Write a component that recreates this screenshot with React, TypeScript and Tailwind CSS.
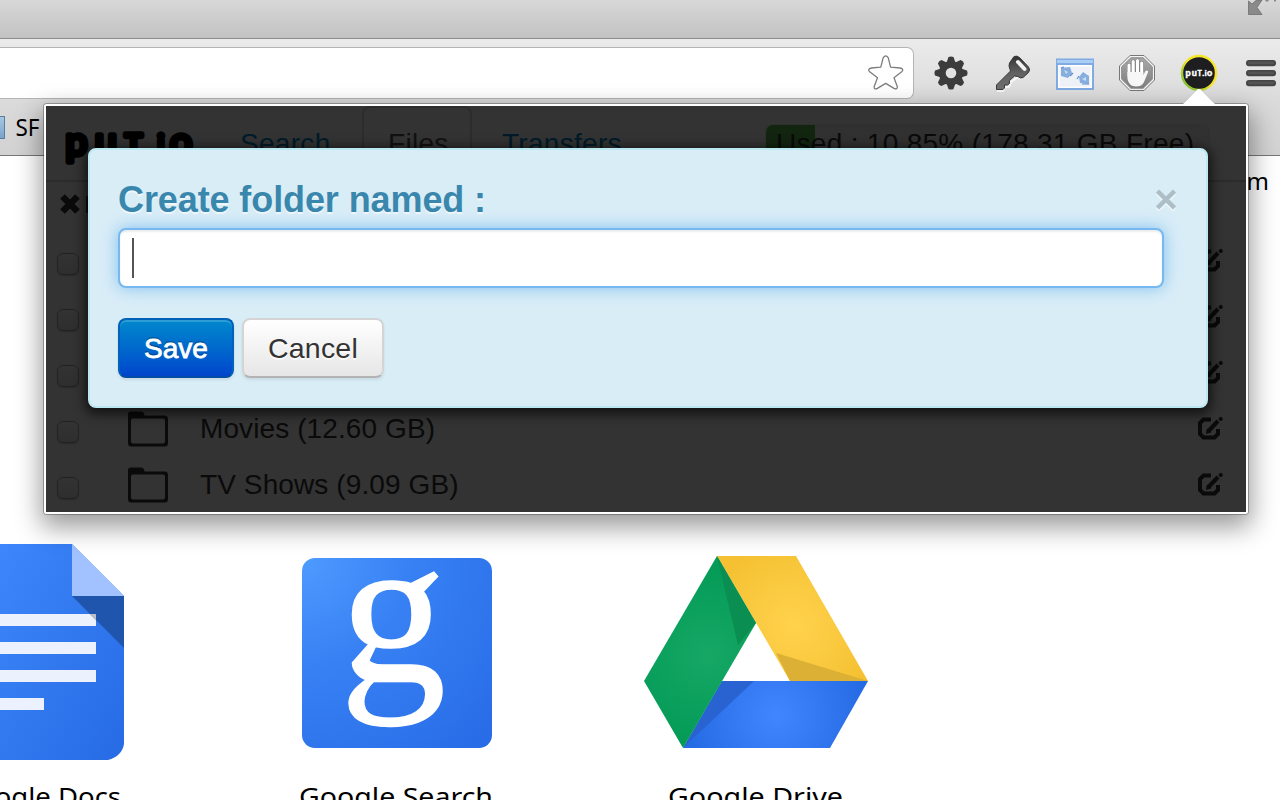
import React from 'react';

const ROWS = [
  { name: '', size: '' },
  { name: '', size: '' },
  { name: '', size: '' },
  { name: 'Movies', size: '(12.60 GB)' },
  { name: 'TV Shows', size: '(9.09 GB)' },
];

function StarIcon() {
  return (
    <svg className="h-[38px] w-[38px]" viewBox="866 54 38 38" fill="#fff" stroke="#7d7d7d" strokeWidth="1.3" strokeLinejoin="round">
      <path d="M883.2 57.6Q885.7 54 888.2 57.6L890.6 67.2L900 68Q904.5 69 901.7 71.8L894 77.7L897.3 86.5Q897.6 90 894 88.4L885.7 83.4L877.4 88.4Q873.8 90 874.2 86.5L877.5 77.7L869.7 71.8Q867 69 871.4 68L880.8 67.2Z" />
    </svg>
  );
}

function GearIcon() {
  return (
    <svg className="h-[38px] w-[38px]" viewBox="-19 -19 38 38">
      <g fill="#3c3c3c">
        {[0, 45, 90, 135, 180, 225, 270, 315].map((a) => (
          <path key={a} d="M-4.6 -10L-2.5 -16Q0 -17.2 2.5 -16L4.6 -10Z" transform={`rotate(${a})`} />
        ))}
      </g>
      <circle r="8.7" fill="none" stroke="#3c3c3c" strokeWidth="6.8" />
    </svg>
  );
}

function KeyIcon() {
  return (
    <svg className="h-[38px] w-[38px]" viewBox="994 54 38 38">
      <defs>
        <linearGradient id="key" x1="0" y1="0" x2="0" y2="1">
          <stop offset="0" stopColor="#333" />
          <stop offset=".5" stopColor="#606060" />
          <stop offset="1" stopColor="#707070" />
        </linearGradient>
      </defs>
      <path d="M997 91H1003L1005 87H1009L1011 82L1018 77L1021 79" fill="none" stroke="#f6f6f6" strokeWidth="2" />
      <path d="M1014 56.5Q1017 55 1020 58L1028.5 67Q1031 70 1028 73L1023 77.5Q1020 79 1018 76.5L1014.5 76L1009.5 80.5V83.5L1007.5 85H1004.5V88L1003 89.5H996.5V85L1010.5 71L1009 66L1009.5 63Z" fill="url(#key)" stroke="#393939" strokeWidth="1" />
      <path d="M1018 62L1024.5 69" stroke="#f2f2f2" strokeWidth="4" strokeLinecap="round" />
    </svg>
  );
}

function WindowIcon() {
  return (
    <svg className="h-[38px] w-[38px]" viewBox="1056 54 38 38">
      <rect x="1056" y="58.5" width="38" height="31.5" fill="#7fabe2" />
      <rect x="1057" y="60" width="36" height="3" fill="#a9cdf5" />
      <rect x="1058" y="65" width="34" height="23" fill="#fff" />
      <rect x="1059.5" y="66.5" width="31" height="20" fill="#eef2f8" />
      <path d="M1061 68L1070 67L1072 73L1068 78L1061 76Z M1079 77L1083 72L1089 76V84L1080 83Z" fill="#86aede" />
      <path d="M1064 70L1068 72L1066 74Z M1082 79L1086 77V81Z" fill="#c8ddf5" />
      <path d="M1061 68L1064 67M1070 76L1073 73M1077 79L1079 76M1082 84H1089" stroke="#5c8fd0" strokeWidth="1.2" />
    </svg>
  );
}

function HandIcon() {
  return (
    <svg className="h-[38px] w-[38px]" viewBox="1118 54 38 38">
      <defs>
        <linearGradient id="hand" x1="0" y1="0" x2="0" y2="1">
          <stop offset="0" stopColor="#a8a8a8" />
          <stop offset="1" stopColor="#7d7d7d" />
        </linearGradient>
      </defs>
      <path d="M1130 55.5H1144L1154.5 66V80L1144 90.5H1130L1119.5 80V66Z" fill="#f4f4f4" stroke="#777" strokeWidth="1" />
      <path d="M1130.8 57.8H1143.2L1152.3 66.8V79.2L1143.2 88.2H1130.8L1121.7 79.2V66.8Z" fill="url(#hand)" stroke="#888" strokeWidth="1" />
      <path d="M1129 76V65M1133.2 74V61.5M1137.5 74V60.5M1141.7 74V63" stroke="#777" strokeWidth="4" strokeLinecap="round" />
      <path d="M1129 76V65M1133.2 74V61.5M1137.5 74V60.5M1141.7 74V63" stroke="#fff" strokeWidth="3.1" strokeLinecap="round" />
      <path d="M1127.5 72H1143.3V75L1145.5 71Q1147.5 69.5 1148.2 71.8L1144 82Q1142 86.5 1136 86.5Q1129 86.5 1127.5 79Z" fill="#f7f7f7" />
    </svg>
  );
}

function PutioIcon() {
  return (
    <svg className="h-[38px] w-[38px]" viewBox="1180 54 38 38">
      <defs>
        <linearGradient id="ring" x1="0" y1="1" x2=".5" y2=".5">
          <stop offset="0" stopColor="#5fb52c" />
          <stop offset="1" stopColor="#f5e52b" />
        </linearGradient>
      </defs>
      <circle cx="1199" cy="73" r="17" fill="#1e1e20" stroke="url(#ring)" strokeWidth="2.4" />
      <text y="75.5" fill="#fff" stroke="#fff" strokeWidth=".5" className="font-['Lato',sans-serif] text-[9px] font-bold">
        <tspan x="1185.5">p</tspan>
        <tspan x="1191.8">u</tspan>
        <tspan x="1197.4" fontSize="7">T</tspan>
        <tspan x="1202.3" fontSize="8">.</tspan>
        <tspan x="1204.8" fontSize="7">i</tspan>
        <tspan x="1207">o</tspan>
      </text>
    </svg>
  );
}

function MenuIcon() {
  return (
    <svg className="h-[38px] w-[38px] shrink-0" viewBox="1242 54 38 38">
      {[60, 70, 80].map((y) => (
        <g key={y}>
          <rect x="1246" y={y} width="30" height="6.2" rx="3" fill="#454545" />
          <rect x="1248" y={y + 1.6} width="26" height="2.6" rx="1.3" fill="#545454" />
        </g>
      ))}
    </svg>
  );
}

function FolderIcon() {
  return (
    <svg className="h-[36px] w-[40px]" viewBox="128 411 40 36">
      <path d="M128 418V414Q128 411.5 131 411.5H141Q144 411.5 144.5 415.5H164.5Q168 415.5 168 419V443Q168 446.5 164.5 446.5H131.5Q128 446.5 128 443ZM131 420V441.5Q131 443.5 133 443.5H163Q165 443.5 165 441.5V420.5Q165 418.5 163 418.5H132.5Q131 418.5 131 420Z" fill="#0a0a0a" fillRule="evenodd" />
    </svg>
  );
}

function EditIcon() {
  return (
    <svg className="h-[24px] w-[26px]" viewBox="1198 416 26 24" fill="none" stroke="#0a0a0a">
      <path d="M1211 419.5H1203.5L1200 423V434L1203.5 437.5H1214.5L1218 434V429" strokeWidth="4" />
      <path d="M1208 431.5L1218 421" strokeWidth="4" />
      <path d="M1206.5 433.2L1207.5 429L1211 432Z" fill="#0a0a0a" />
      <circle cx="1220.7" cy="419" r="1.6" fill="#0a0a0a" strokeWidth="1" />
    </svg>
  );
}

function DocsIcon() {
  return (
    <svg className="h-[216px] w-[124px] shrink-0" viewBox="0 544 124 216">
      <defs>
        <linearGradient id="docs" x1="0" y1="0" x2="1" y2="1">
          <stop offset="0" stopColor="#3d86fb" />
          <stop offset="1" stopColor="#266be4" />
        </linearGradient>
      </defs>
      <path d="M0 544H72L124 596V744Q122 756 108 760H0Z" fill="url(#docs)" />
      <path d="M0 614H96V626H0ZM0 642H96V654H0ZM0 670H96V682H0ZM0 698H44V710H0Z" fill="#ebf1fd" />
      <path d="M72 596H124V648Z" fill="#2055ae" />
      <path d="M89.5 614H96V620.5Z" fill="#b9bfca" />
      <path d="M72 544L124 596H72Z" fill="#a1c2ff" />
    </svg>
  );
}

function SearchTile() {
  return (
    <svg className="h-[190px] w-[190px] shrink-0" viewBox="302 558 190 190">
      <defs>
        <radialGradient id="tile" cx="0" cy="0" r="1.4">
          <stop offset="0" stopColor="#4e9bff" />
          <stop offset=".4" stopColor="#3881f4" />
          <stop offset="1" stopColor="#276be6" />
        </radialGradient>
      </defs>
      <rect x="302" y="558" width="190" height="190" rx="13" fill="url(#tile)" />
      <text x="340" y="681" fill="#fff" stroke="#fff" strokeWidth="1.5" className="font-['Liberation_Serif',serif] text-[212px]">g</text>
    </svg>
  );
}

function DriveIcon() {
  return (
    <svg className="h-[192px] w-[224px] shrink-0" viewBox="644 556 224 192">
      <defs>
        <radialGradient id="dg" gradientUnits="userSpaceOnUse" cx="708" cy="655" r="90">
          <stop offset="0" stopColor="#16a765" />
          <stop offset="1" stopColor="#049b57" />
        </radialGradient>
        <radialGradient id="dy" gradientUnits="userSpaceOnUse" cx="794" cy="625" r="85">
          <stop offset="0" stopColor="#ffd24d" />
          <stop offset="1" stopColor="#f5c132" />
        </radialGradient>
        <radialGradient id="db" gradientUnits="userSpaceOnUse" cx="776" cy="715" r="90">
          <stop offset="0" stopColor="#4286ff" />
          <stop offset="1" stopColor="#256be4" />
        </radialGradient>
      </defs>
      <path d="M717 556H796L868 681H790Z" fill="url(#dy)" />
      <path d="M776 653L868 681H790Z" fill="#dcb035" />
      <path d="M722 681H868L830 748H683Z" fill="url(#db)" />
      <path d="M722 681H754L683 748Z" fill="#2863d1" />
      <path d="M717 556L756 623L683 748L644 681Z" fill="url(#dg)" />
      <path d="M717 556L756 623L738 645Z" fill="#0b8e51" />
    </svg>
  );
}

function AppLabel({ text, width, className }: { text: string; width: number; className: string }) {
  return (
    <svg className={className} viewBox={`0 0 ${width} 36`}>
      <text x="0" y="26" textLength={width} lengthAdjust="spacingAndGlyphs" className="font-['Noto_Sans',sans-serif] text-[26px]">{text}</text>
    </svg>
  );
}

function Browser() {
  return (
    <div className="flex h-[156px] flex-col border-b border-[#777] bg-[#dedede]">
      <div className="flex h-[38px] shrink-0 justify-end bg-gradient-to-b from-[#d8d8d8] to-[#c2c2c2] pr-[4px]">
        <svg className="h-[18px] w-[30px]" viewBox="1246 0 30 18" fill="#8a8a8a">
          <path d="M1248.5 1L1252 4L1256.5 0H1262L1257 7.5L1262 14.5H1248.5Z" stroke="#666" strokeWidth=".7" />
          <path d="M1265 0L1266 1.5H1268L1269 0ZM1274 0H1276V1.5H1274Z" />
        </svg>
      </div>
      <div className="flex h-[66px] shrink-0 items-start border-t border-[#8c8c8c] bg-gradient-to-b from-[#ebebeb] to-[#dadada] pt-[8px]">
        <div className="flex h-[52px] w-[914px] items-center justify-end rounded-r-[7px] border border-l-0 border-[#b4b4b4] bg-white pr-[9px]">
          <StarIcon />
        </div>
        <div className="flex h-[52px] items-center gap-6 pl-[18px]">
          <GearIcon />
          <KeyIcon />
          <WindowIcon />
          <HandIcon />
          <PutioIcon />
          <MenuIcon />
        </div>
      </div>
      <div className="flex flex-1 items-start bg-gradient-to-b from-[#dadada] to-[#d2d2d2] pt-[12px]">
        <div className="h-[23px] w-[5px] border border-l-0 border-[#5a7e9f] bg-gradient-to-b from-[#a9c6e4] to-[#7ba2cb]" />
        <svg className="ml-[10px] h-[32px] w-[26px]" viewBox="0 0 26 32">
          <text x="0.5" y="20" textLength="24" lengthAdjust="spacingAndGlyphs" className="font-['Noto_Sans',sans-serif] text-[23px]">SF</text>
        </svg>
      </div>
    </div>
  );
}

function Apps() {
  return (
    <div className="flex h-[644px] flex-col overflow-hidden bg-white">
      <div className="flex h-[388px] shrink-0 items-start justify-end pr-[11px] pt-[9px] font-['Noto_Sans',sans-serif] text-[24px] leading-[32px]">m</div>
      <div className="flex h-[256px] shrink-0">
        <div className="flex w-[302px] flex-col">
          <DocsIcon />
          <div className="mt-[20px] flex w-[121px] justify-end overflow-hidden">
            <AppLabel text="Google Docs" width={163} className="h-[36px] w-[163px] shrink-0" />
          </div>
        </div>
        <div className="flex w-[342px] flex-col pt-[14px]">
          <SearchTile />
          <AppLabel text="Google Search" width={194} className="-ml-[3px] mt-[32px] h-[36px] w-[194px] shrink-0" />
        </div>
        <div className="flex flex-col pt-[12px]">
          <DriveIcon />
          <AppLabel text="Google Drive" width={175} className="ml-[24px] mt-[32px] h-[36px] w-[175px] shrink-0" />
        </div>
      </div>
    </div>
  );
}

function Wordmark() {
  return (
    <svg className="ml-[18px] mt-[10px] h-[60px] w-[134px] shrink-0" viewBox="64 116 134 60">
      <text y="154.5" fill="#000" stroke="#000" strokeWidth="5.5" strokeLinejoin="round" strokeLinecap="round" className="font-['Lato',sans-serif] text-[39px]">
        <tspan x="65.5">p</tspan>
        <tspan x="95">u</tspan>
        <tspan x="125" fontSize="29">T</tspan>
        <tspan x="148" fontSize="30">.</tspan>
        <tspan x="157.500" fontSize="28">i</tspan>
        <tspan x="170">o</tspan>
      </text>
    </svg>
  );
}

function FileList() {
  return (
    <div className="flex h-full flex-col bg-[#333] text-[28px] leading-[40px] text-[#0a0a0a]">
      <div className="flex h-[76px] shrink-0 items-start border-b-2 border-[#2b2b2b] tracking-[0.3px]">
        <Wordmark />
        <div className="ml-[42px] mt-[18px] w-[122px] shrink-0 text-[#001b29]">Search</div>
        <div className="h-[76px] w-[110px] shrink-0 rounded-t-[8px] border-2 border-b-0 border-[#2c2c2c] pl-[24px] pt-[16px] text-[#111]">Files</div>
        <div className="ml-[30px] mt-[18px] w-[263px] shrink-0 text-[#001b29]">Transfers</div>
        <div className="mt-[18px] flex h-[40px] w-[445px] shrink-0 overflow-hidden rounded-[8px] border border-[#303030] bg-gradient-to-b from-[#303030] to-[#333]">
          <div className="h-full w-[49px] shrink-0 whitespace-nowrap bg-[#12250f] pl-[10px] leading-[38px]">
            Used : 10.85% (178.31 GB Free)
          </div>
        </div>
      </div>
      <div className="flex h-[54px] shrink-0 items-start pl-[14px] pt-[12px]">
        <svg className="h-[20px] w-[20px]" viewBox="0 0 20 20" stroke="#0a0a0a" strokeWidth="6.5"><path d="M2.5 2.5L17.5 17.5M17.5 2.5L2.5 17.5" /></svg>
        <div className="ml-[6px] mt-[2px] h-[17px] w-[5px] bg-[#101010]" />
      </div>
      {ROWS.map((row, i) => (
        <div key={i} className="flex h-[56px] shrink-0 items-center pl-[11px] pr-[22px]">
          <div className="-mt-[1px] h-[22px] w-[22px] rounded-[6px] border border-[#222] bg-gradient-to-b from-[#333] to-[#2e2e2e] shadow-[0_1px_1px_#292929]" />
          <div className="ml-[49px] -mt-[6px]"><FolderIcon /></div>
          <div className="ml-[32px] -mt-[6px] flex-1 tracking-[0.1px]">{row.name} {row.size}</div>
          <div className="-mt-[8px]"><EditIcon /></div>
        </div>
      ))}
    </div>
  );
}

function Dialog() {
  return (
    <div className="absolute left-[42px] top-[42px] flex h-[260px] w-[1120px] flex-col rounded-[8px] border-2 border-[#bce8f1] bg-[#d9edf7] px-[28px] pt-[28px] shadow-[0_3px_12px_3px_rgba(0,0,0,0.65)]">
      <div className="flex h-[50px] items-start justify-between">
        <h4 className="pt-[1px] text-[36px] leading-[42px] font-bold tracking-[-0.1px] text-[#3a87ad] [text-shadow:0_2px_0_rgba(255,255,255,0.6)]">Create folder named :</h4>
        <svg className="mr-[2px] mt-[11px] h-[22px] w-[20px]" viewBox="0 0 20 22" fill="none" strokeWidth="4.5">
          <path d="M1.5 4L18.5 21M18.5 4L1.5 21" stroke="#edf6fb" />
          <path d="M1.5 2L18.5 19M18.5 2L1.5 19" stroke="#aebec6" />
        </svg>
      </div>
      <div className="flex h-[60px] w-[1046px] items-center rounded-[8px] border-2 border-[#75b9f0] bg-white pl-[12px] shadow-[inset_0_2px_2px_rgba(0,0,0,0.08),0_0_16px_rgba(82,168,236,0.65)]">
        <div className="h-[40px] w-[2px] bg-[#555]" />
      </div>
      <div className="mt-[30px] flex gap-[8px] text-[28px]">
        <button className="h-[60px] w-[116px] rounded-[8px] border-2 border-[#0062b8] border-b-[#004da3] bg-gradient-to-b from-[#0088cc] to-[#0044cc] text-center leading-[58px] text-white shadow-[inset_0_2px_0_rgba(255,255,255,0.18),0_2px_3px_rgba(0,0,0,0.08)] [-webkit-text-stroke:0.8px_white] [text-shadow:0_-2px_0_rgba(0,0,0,0.25)]">Save</button>
        <button className="h-[60px] w-[142px] rounded-[8px] border-2 border-[#d4d4d4] border-b-[#b3b3b3] bg-gradient-to-b from-white to-[#e6e6e6] text-center text-[28.5px] leading-[56px] tracking-[0.2px] text-[#333] shadow-[0_2px_3px_rgba(0,0,0,0.08)] [text-shadow:0_2px_1px_rgba(255,255,255,0.75)]">Cancel</button>
      </div>
    </div>
  );
}

export default function App() {
  return (
    <main className="relative h-[800px] w-[1280px] overflow-hidden bg-white text-black">
      <Browser />
      <Apps />
      <div className="absolute left-[44px] top-[104px] h-[410px] w-[1204px] rounded-[3px] border-2 border-white shadow-[0_0_0_1px_rgba(0,0,0,0.28),0_10px_26px_3px_rgba(0,0,0,0.4)] font-['Liberation_Sans',Arial,sans-serif]">
        <FileList />
        <Dialog />
        <svg className="absolute -top-[18px] left-[1136px] h-[18px] w-[34px]" viewBox="0 0 34 18">
          <path d="M1 16L14.5 2Q17 0 19.5 2L33 16V18H1Z" fill="#fff" />
          <path d="M1 16L14.5 2M19.5 2L33 16" fill="none" stroke="#bbb" strokeWidth=".6" />
        </svg>
      </div>
    </main>
  );
}
